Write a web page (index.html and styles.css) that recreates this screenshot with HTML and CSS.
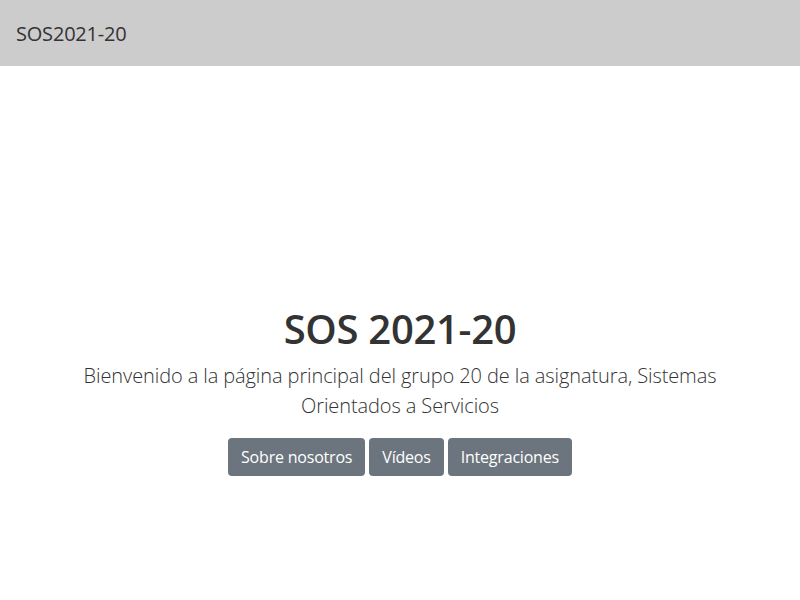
FILE: index.html
```html
<!DOCTYPE html>
<html lang="es">
<head>
<meta charset="utf-8">
<title>SOS2021-20</title>
<link rel="stylesheet" href="styles.css">
</head>
<body>
<header class="topbar">
  <span class="brand">SOS2021-20</span>
</header>
<main class="hero">
  <h1 class="title">SOS 2021-20</h1>
  <p class="lead">Bienvenido a la página principal del grupo 20 de la asignatura, Sistemas Orientados a Servicios</p>
  <div class="actions">
    <a class="btn" href="#">Sobre nosotros</a>
    <a class="btn" href="#">Vídeos</a>
    <a class="btn" href="#">Integraciones</a>
  </div>
</main>
</body>
</html>
```
FILE: styles.css
```css
* { box-sizing: border-box; }
html, body { margin: 0; padding: 0; }
body {
  font-family: "Open Sans", "DejaVu Sans", sans-serif;
  color: #333333;
  background: #ffffff;
}
.topbar {
  height: 66px;
  background: #cccccc;
  display: flex;
  align-items: center;
  padding: 0 16px;
}
.brand {
  font-size: 20px;
  color: #333333;
  letter-spacing: -0.2px;
}
.hero {
  display: flex;
  flex-direction: column;
  align-items: center;
  padding-top: 239px;
}
.title {
  margin: 0;
  font-size: 40px;
  font-weight: 600;
  line-height: 48px;
  color: #333333;
  letter-spacing: -0.3px;
}
.lead {
  margin: 8px 0 0;
  max-width: 680px;
  text-align: center;
  font-size: 20px;
  font-weight: 300;
  line-height: 30px;
  color: #333333;
  letter-spacing: -0.1px;
}
.actions {
  display: flex;
  gap: 4px;
  margin-top: 17px;
}
.btn {
  display: inline-flex;
  align-items: center;
  height: 38px;
  padding: 0 13px;
  background: #6c757d;
  color: #ffffff;
  border-radius: 4px;
  font-size: 16px;
  text-decoration: none;
  letter-spacing: -0.2px;
}
```
